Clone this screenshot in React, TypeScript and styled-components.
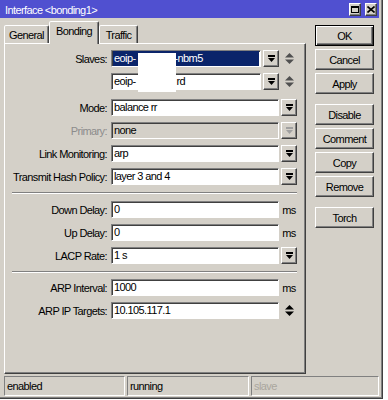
import React from "react";
import styled, { createGlobalStyle, css } from "styled-components";

const face = "#d4d0c8";
const shade = "#808080";
const dark = "#404040";
const light = "#ffffff";

const GlobalStyle = createGlobalStyle`
  html, body {
    margin: 0;
    padding: 0;
    background: #ffffff;
  }
  body {
    font-family: "Liberation Sans", Arial, sans-serif;
    font-size: 11px;
    letter-spacing: -0.6px;
    color: #000;
  }
`;

const raised = css`
  border: 1px solid;
  border-color: ${light} ${dark} ${dark} ${light};
  box-shadow: inset -1px -1px 0 ${shade};
`;

const sunken = css`
  border: 1px solid;
  border-color: ${shade} ${light} ${light} ${shade};
  box-shadow: inset 1px 1px 0 ${dark};
`;

const Window = styled.div`
  width: 383px;
  height: 399px;
  box-sizing: border-box;
  background: ${face};
  border-right: 1px solid ${dark};
  border-bottom: 1px solid ${dark};
  box-shadow: inset -1px -1px 0 ${shade};
  display: flex;
  flex-direction: column;
`;

const TitleBar = styled.div`
  height: 18px;
  margin-right: 3px;
  box-sizing: border-box;
  padding: 2px 2px 0 5px;
  background: #5050d0;
  color: #fff;
  line-height: 17px;
  display: flex;
  align-items: flex-start;
`;

const TitleText = styled.div`
  flex: 1;
`;

const TitleButton = styled.div`
  width: 12px;
  height: 13px;
  margin-top: 1px;
  margin-left: 4px;
  box-sizing: border-box;
  background: ${face};
  ${raised};
  display: flex;
  align-items: center;
  justify-content: center;
`;

const Main = styled.div`
  display: flex;
  padding: 3px 0 0 4px;
`;

const LeftCol = styled.div`
  width: 302px;
  display: flex;
  flex-direction: column;
`;

const TabBar = styled.div`
  height: 22px;
  display: flex;
  align-items: flex-end;
  position: relative;
  z-index: 1;
`;

const Tab = styled.div<{ $active?: boolean; $w: number }>`
  width: ${(p) => p.$w}px;
  height: ${(p) => (p.$active ? 23 : 18)}px;
  margin-bottom: ${(p) => (p.$active ? -1 : 0)}px;
  box-sizing: border-box;
  background: ${face};
  border: 1px solid;
  border-bottom: none;
  border-color: ${light} ${dark} transparent ${light};
  box-shadow: inset -1px 0 0 ${shade};
  border-radius: 2px 2px 0 0;
  display: flex;
  align-items: ${(p) => (p.$active ? "flex-start" : "center")};
  padding-top: ${(p) => (p.$active ? 3 : 0)}px;
  justify-content: center;
`;

const Panel = styled.div`
  position: relative;
  height: 331px;
  box-sizing: border-box;
  ${raised};
  padding-top: 5px;
`;

const Row = styled.div<{ $top?: number }>`
  display: flex;
  align-items: center;
  height: 17px;
  margin-top: ${(p) => p.$top ?? 6}px;
  padding-right: 8px;
`;

const Label = styled.div<{ $disabled?: boolean }>`
  width: 102px;
  text-align: right;
  margin-right: 4px;
  white-space: nowrap;
  color: ${(p) => (p.$disabled ? "#8c8c8c" : "#000")};
`;

const Field = styled.div<{ $disabled?: boolean }>`
  flex: 1;
  height: 17px;
  box-sizing: border-box;
  ${sunken};
  background: ${(p) => (p.$disabled ? face : "#fff")};
  padding: 0 2px;
  line-height: 15px;
  white-space: nowrap;
  overflow: hidden;
  display: flex;
`;

const Selection = styled.span`
  flex: 1;
  background: #0a246a;
  color: #fff;
  margin: 0 -1px;
  padding: 0 1px;
`;

const Hidden = styled.span<{ $w: number }>`
  display: inline-block;
  width: ${(p) => p.$w}px;
`;

const DropButton = styled.div<{ $disabled?: boolean }>`
  width: 16px;
  height: 17px;
  margin-left: 2px;
  box-sizing: border-box;
  ${raised};
  display: flex;
  align-items: center;
  justify-content: center;
  color: ${(p) => (p.$disabled ? "#a0a0a0" : "#000")};
`;

const Accessory = styled.div<{ $color?: string }>`
  width: 16px;
  margin-left: 2px;
  display: flex;
  align-items: center;
  justify-content: center;
  color: ${(p) => p.$color ?? "#000"};
`;

const Separator = styled.div<{ $top: number }>`
  margin: ${(p) => p.$top}px 8px 0 7px;
  height: 0;
  border-top: 1px solid ${shade};
  border-bottom: 1px solid ${light};
`;

const Censor = styled.div`
  position: absolute;
  left: 133px;
  top: 9px;
  width: 38px;
  height: 39px;
  background: #fff;
`;

const ButtonCol = styled.div`
  width: 59px;
  margin-left: 9px;
  padding-top: 4px;
  display: flex;
  flex-direction: column;
`;

const Button = styled.div<{ $top?: number; $default?: boolean }>`
  height: 21px;
  box-sizing: border-box;
  margin-top: ${(p) => p.$top ?? 3}px;
  ${raised};
  ${(p) =>
    p.$default &&
    css`
      border: 1px solid #000;
      box-shadow: inset 1px 1px 0 ${light}, inset -1px -1px 0 ${dark},
        inset -2px -2px 0 ${shade};
    `}
  display: flex;
  align-items: center;
  justify-content: center;
`;

const StatusBar = styled.div`
  display: flex;
  gap: 2px;
  margin-top: 2px;
  padding-left: 4px;
`;

const StatusCell = styled.div<{ $w: number; $disabled?: boolean }>`
  width: ${(p) => p.$w}px;
  height: 20px;
  box-sizing: border-box;
  border: 1px solid;
  border-color: ${shade} ${light} ${light} ${shade};
  padding-left: 2px;
  line-height: 18px;
  color: ${(p) => (p.$disabled ? "#aaa69e" : "#000")};
`;

const DropIcon = () => (
  <svg width="7" height="8" viewBox="0 0 7 8">
    <rect x="0" y="0" width="7" height="2" fill="currentColor" />
    <path d="M0 3h7L3.5 7z" fill="currentColor" />
  </svg>
);

const SpinIcon = () => (
  <svg width="9" height="11" viewBox="0 0 9 11">
    <path d="M4.5 0L9 4.5H0z" fill="currentColor" />
    <path d="M0 6.5h9L4.5 11z" fill="currentColor" />
  </svg>
);

type Opt = { drop?: boolean; unit?: string; spin?: boolean };

const FormRow = ({
  label,
  value,
  top,
  disabled,
  drop,
  unit,
  spin,
}: { label: string; value: string; top?: number; disabled?: boolean } & Opt) => (
  <Row $top={top}>
    <Label $disabled={disabled}>{label}:</Label>
    <Field $disabled={disabled}>{value}</Field>
    {drop && (
      <DropButton $disabled={disabled}>
        <DropIcon />
      </DropButton>
    )}
    {unit && <Accessory>{unit}</Accessory>}
    {spin && (
      <Accessory>
        <SpinIcon />
      </Accessory>
    )}
  </Row>
);

const buttons = ["OK", "Cancel", "Apply", "Disable", "Comment", "Copy", "Remove", "Torch"];

export default function App() {
  return (
    <>
      <GlobalStyle />
      <Window>
        <TitleBar>
          <TitleText>Interface &lt;bonding1&gt;</TitleText>
          <TitleButton>
            <svg width="8" height="7" viewBox="0 0 8 7">
              <rect x="0.5" y="0.5" width="7" height="6" fill="none" stroke="#000" />
              <rect x="0" y="0" width="8" height="2" fill="#000" />
            </svg>
          </TitleButton>
          <TitleButton>
            <svg width="8" height="7" viewBox="0 0 8 7">
              <path d="M0.5 0.5L7.5 6.5M7.5 0.5L0.5 6.5" stroke="#000" strokeWidth="1.6" />
            </svg>
          </TitleButton>
        </TitleBar>
        <Main>
          <LeftCol>
            <TabBar>
              <Tab $w={45}>General</Tab>
              <Tab $w={50} $active>
                Bonding
              </Tab>
              <Tab $w={39}>Traffic</Tab>
            </TabBar>
            <Panel>
              <Row $top={1}>
                <Label>Slaves:</Label>
                <Field>
                  <Selection>
                    eoip-<Hidden $w={39} />-nbm5
                  </Selection>
                </Field>
                <DropButton>
                  <DropIcon />
                </DropButton>
                <Accessory $color="#505050">
                  <SpinIcon />
                </Accessory>
              </Row>
              <Row>
                <Label />
                <Field>
                  eoip-<Hidden $w={41} />rd
                </Field>
                <DropButton>
                  <DropIcon />
                </DropButton>
                <Accessory $color="#505050">
                  <SpinIcon />
                </Accessory>
              </Row>
              <FormRow label="Mode" value="balance rr" top={9} drop />
              <FormRow label="Primary" value="none" disabled drop />
              <FormRow label="Link Monitoring" value="arp" drop />
              <FormRow label="Transmit Hash Policy" value="layer 3 and 4" drop />
              <Separator $top={7} />
              <FormRow label="Down Delay" value="0" top={7} unit="ms" />
              <FormRow label="Up Delay" value="0" unit="ms" />
              <FormRow label="LACP Rate" value="1 s" drop />
              <Separator $top={7} />
              <FormRow label="ARP Interval" value="1000" top={6} unit="ms" />
              <FormRow label="ARP IP Targets" value="10.105.117.1" spin />
              <Censor />
            </Panel>
          </LeftCol>
          <ButtonCol>
            {buttons.map((b, i) => (
              <Button
                key={b}
                $default={i === 0}
                $top={i === 0 ? 0 : i === 3 || i === 7 ? 10 : 3}
              >
                {b}
              </Button>
            ))}
          </ButtonCol>
        </Main>
        <StatusBar>
          <StatusCell $w={121}>enabled</StatusCell>
          <StatusCell $w={122}>running</StatusCell>
          <StatusCell $w={128} $disabled>
            slave
          </StatusCell>
        </StatusBar>
      </Window>
    </>
  );
}
